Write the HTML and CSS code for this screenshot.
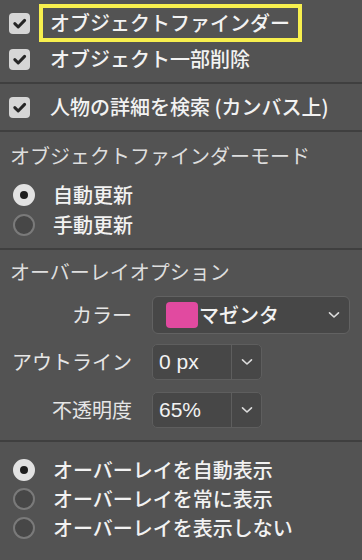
FILE: index.html
```html
<!DOCTYPE html>
<html lang="ja">
<head>
<meta charset="utf-8">
<link rel="stylesheet" href="styles.css">
</head>
<body>
<div class="panel">
  <section class="sec sec-a">
    <div class="check-row">
      <span class="checkbox"><svg viewBox="0 0 21 21" width="21" height="21"><path d="M5.8 10.6 L9.2 14 L15.6 7.4" fill="none" stroke="#262626" stroke-width="3" stroke-linecap="round" stroke-linejoin="round"/></svg></span>
      <span class="label highlight">オブジェクトファインダー</span>
    </div>
    <div class="check-row">
      <span class="checkbox"><svg viewBox="0 0 21 21" width="21" height="21"><path d="M5.8 10.6 L9.2 14 L15.6 7.4" fill="none" stroke="#262626" stroke-width="3" stroke-linecap="round" stroke-linejoin="round"/></svg></span>
      <span class="label">オブジェクト一部削除</span>
    </div>
  </section>
  <div class="sep"></div>
  <section class="sec sec-b">
    <div class="check-row">
      <span class="checkbox"><svg viewBox="0 0 21 21" width="21" height="21"><path d="M5.8 10.6 L9.2 14 L15.6 7.4" fill="none" stroke="#262626" stroke-width="3" stroke-linecap="round" stroke-linejoin="round"/></svg></span>
      <span class="label">人物の詳細を検索 (カンバス上)</span>
    </div>
  </section>
  <div class="sep"></div>
  <section class="sec sec-c">
    <div class="heading">オブジェクトファインダーモード</div>
    <div class="radio-row"><span class="radio on"></span><span class="label">自動更新</span></div>
    <div class="radio-row"><span class="radio"></span><span class="label">手動更新</span></div>
  </section>
  <div class="sep"></div>
  <section class="sec sec-d">
    <div class="heading">オーバーレイオプション</div>
    <div class="field-row row-color">
      <span class="field-label">カラー</span>
      <div class="select">
        <span class="swatch"></span>
        <span class="select-text">マゼンタ</span>
        <svg class="chev" viewBox="0 0 12 8" width="12" height="8"><path d="M1.5 1.8 L6 6 L10.5 1.8" fill="none" stroke="#dcdcdc" stroke-width="1.6" stroke-linecap="round" stroke-linejoin="round"/></svg>
      </div>
    </div>
    <div class="field-row row-outline">
      <span class="field-label">アウトライン</span>
      <div class="combo">
        <span class="combo-text">0 px</span>
        <span class="combo-btn"><svg viewBox="0 0 12 8" width="12" height="8"><path d="M1.5 1.8 L6 6 L10.5 1.8" fill="none" stroke="#dcdcdc" stroke-width="1.6" stroke-linecap="round" stroke-linejoin="round"/></svg></span>
      </div>
    </div>
    <div class="field-row row-opacity">
      <span class="field-label">不透明度</span>
      <div class="combo">
        <span class="combo-text">65%</span>
        <span class="combo-btn"><svg viewBox="0 0 12 8" width="12" height="8"><path d="M1.5 1.8 L6 6 L10.5 1.8" fill="none" stroke="#dcdcdc" stroke-width="1.6" stroke-linecap="round" stroke-linejoin="round"/></svg></span>
      </div>
    </div>
  </section>
  <div class="sep"></div>
  <section class="sec sec-e">
    <div class="radio-row tight"><span class="radio on"></span><span class="label">オーバーレイを自動表示</span></div>
    <div class="radio-row tight"><span class="radio"></span><span class="label">オーバーレイを常に表示</span></div>
    <div class="radio-row tight"><span class="radio"></span><span class="label">オーバーレイを表示しない</span></div>
  </section>
</div>
</body>
</html>
```
FILE: styles.css
```css
* { box-sizing: border-box; }
html, body {
  margin: 0;
  padding: 0;
  background: #535353;
}
body {
  width: 362px;
  height: 560px;
  overflow: hidden;
  font-family: "Noto Sans CJK JP", "Liberation Sans", sans-serif;
  font-size: 20px;
  font-weight: 500;
  color: #f2f2f2;
}
.panel {
  display: flex;
  flex-direction: column;
}
.sep {
  height: 2px;
  background: #3f3f3f;
}
.sec-a { padding: 5px 0 5px; }
.sec-b { padding: 5px 0 5px; }
.sec-c { padding: 10px 0 8px; }
.sec-d { padding: 8px 0 12px; }
.sec-e { padding: 13px 0 18px; }

.check-row {
  height: 36px;
  display: flex;
  align-items: center;
  padding-left: 9px;
}
.checkbox {
  width: 21px;
  height: 21px;
  border-radius: 4px;
  background: #d6d6d6;
  display: flex;
  flex: none;
}
.label {
  line-height: 28px;
  white-space: nowrap;
}
.check-row .label {
  margin-left: 20px;
}
.check-row .label.highlight {
  margin-left: 9px;
  height: 38px;
  border: 4px solid #f7ef4e;
  padding: 0 8px 0 7px;
  display: flex;
  align-items: center;
}
.heading {
  line-height: 28px;
  padding-left: 10px;
  color: #dedede;
  font-weight: 400;
  margin-bottom: 10px;
}
.radio-row {
  height: 30px;
  display: flex;
  align-items: center;
  padding-left: 13px;
}
.radio-row.tight { height: 29px; }
.radio {
  width: 22px;
  height: 22px;
  border-radius: 50%;
  background: #474747;
  border: 2px solid #7a7a7a;
  flex: none;
  display: flex;
  align-items: center;
  justify-content: center;
}
.radio.on {
  background: #e2e2e2;
  border-color: #e2e2e2;
}
.radio.on::after {
  content: "";
  width: 8px;
  height: 8px;
  border-radius: 50%;
  background: #1f1f1f;
}
.radio-row .label { margin-left: 18px; }

.field-row {
  display: flex;
  align-items: center;
}
.row-color { height: 38px; }
.row-outline { height: 36px; margin-top: 10px; }
.row-opacity { height: 36px; margin-top: 12px; }
.field-label {
  width: 132px;
  text-align: right;
  color: #e6e6e6;
  font-weight: 400;
  line-height: 28px;
  margin-right: 20px;
  white-space: nowrap;
}
.select {
  width: 198px;
  height: 38px;
  border: 1.5px solid #626262;
  border-radius: 6px;
  background: #474747;
  display: flex;
  align-items: center;
  padding-left: 13px;
  padding-right: 9px;
}
.swatch {
  width: 32px;
  height: 26px;
  border-radius: 4px;
  background: #e14aa0;
  flex: none;
}
.select-text {
  margin-left: 1px;
  line-height: 28px;
  flex: 1;
}
.chev { flex: none; }
.combo {
  width: 110px;
  height: 36px;
  border: 1.5px solid #5e5e5e;
  border-radius: 5px;
  background: #474747;
  display: flex;
}
.combo-text {
  width: 79px;
  padding-left: 6px;
  display: flex;
  align-items: center;
  font-family: "Liberation Sans", "Noto Sans CJK JP", sans-serif;
  font-size: 21px;
  font-weight: 400;
  border-right: 1.5px solid #5e5e5e;
}
.combo-btn {
  flex: 1;
  display: flex;
  align-items: center;
  justify-content: center;
}
```
